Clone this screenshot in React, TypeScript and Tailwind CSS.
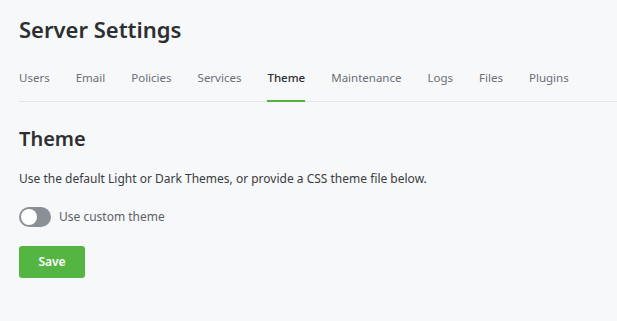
import React from "react";

const tabs = ["Users", "Email", "Policies", "Services", "Theme", "Maintenance", "Logs", "Files", "Plugins"];

const App = () => {
  return (
    <div className="min-h-[321px] w-full bg-[#f7f8fa] font-['Noto_Sans',sans-serif] text-[#2d2f31]">
      <div className="pl-[19px] pt-[13px]">
        <h1 className="text-[22px] font-semibold leading-[32px] text-[#2d2f31]">Server Settings</h1>
      </div>
      {/* tabs */}
      <div className="mt-[24px] ml-[19px] flex gap-[26px] border-b border-[#e3e5e8]">
        {tabs.map((t) => (
          <div
            key={t}
            className={
              t === "Theme"
                ? "-mb-px border-b-2 border-[#52b340] pb-[12px] text-[11.5px] font-medium leading-[18px] text-[#2d2f31]"
                : "pb-[14px] text-[11.5px] leading-[18px] text-[#6a6f74]"
            }
          >
            {t}
          </div>
        ))}
      </div>
      {/* theme section */}
      <div className="px-[19px] pt-[23px]">
        <h2 className="text-[20px] font-semibold leading-[28px] text-[#2d2f31]">Theme</h2>
        <p className="mt-[17px] text-[12px] leading-[18px] text-[#3a3c3e]">
          Use the default Light or Dark Themes, or provide a CSS theme file below.
        </p>
        <div className="mt-[19px] flex items-center gap-[8px]">
          <div className="flex h-[20px] w-[32px] items-center rounded-full bg-[#8b9096] px-[2px]">
            <div className="h-[16px] w-[16px] rounded-full bg-white" />
          </div>
          <span className="text-[12px] leading-[18px] text-[#5d6166]">Use custom theme</span>
        </div>
        <button className="mt-[19px] h-[32px] w-[66px] rounded-[3px] bg-[#55b543] text-[12px] font-semibold text-white">
          Save
        </button>
      </div>
    </div>
  );
};

export default App;
